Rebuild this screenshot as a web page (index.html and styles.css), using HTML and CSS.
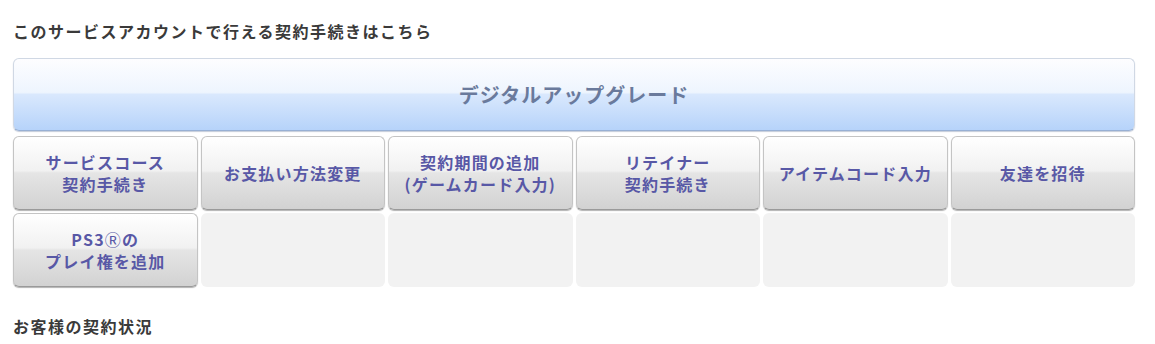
FILE: index.html
```html
<!DOCTYPE html>
<html lang="ja">
    <head>
        <meta charset="UTF-8">
        <meta name="viewport" content="width=device-width, initial-scale=1.0">
        <link rel="stylesheet" href="styles.css">
        <title>契約手続き</title>
    </head>
    <body>
        <div class="page">
            <h2 class="section-title">このサービスアカウントで行える契約手続きはこちら</h2>

            <a class="upgrade-button" href="#">デジタルアップグレード</a>

            <div class="menu-grid">
                <a class="menu-button" href="#"><span>サービスコース<br>契約手続き</span></a>
                <a class="menu-button" href="#"><span>お支払い方法変更</span></a>
                <a class="menu-button" href="#"><span>契約期間の追加<br>(ゲームカード入力)</span></a>
                <a class="menu-button" href="#"><span>リテイナー<br>契約手続き</span></a>
                <a class="menu-button" href="#"><span>アイテムコード入力</span></a>
                <a class="menu-button" href="#"><span>友達を招待</span></a>
                <a class="menu-button" href="#"><span>PS3<span class="reg">Ⓡ</span>の<br>プレイ権を追加</span></a>
                <div class="menu-empty"></div>
                <div class="menu-empty"></div>
                <div class="menu-empty"></div>
                <div class="menu-empty"></div>
                <div class="menu-empty"></div>
            </div>

            <h2 class="section-title status-title">お客様の契約状況</h2>
        </div>
    </body>
</html>
```

FILE: styles.css
```css
body,
html {
    margin: 0;
    background: #fff;
    font-family: "Noto Sans CJK JP", "Noto Sans", sans-serif;
}

.page {
    padding: 0 20px 0 13px;
}

.section-title {
    margin: 0;
    padding-top: 20px;
    font-size: 16px;
    font-weight: bold;
    letter-spacing: 1.5px;
    line-height: 22px;
    color: #3a3a3a;
}

.status-title {
    padding-top: 28px;
}

.upgrade-button {
    display: flex;
    align-items: center;
    justify-content: center;
    height: 71px;
    margin-top: 16px;
    border: 1px solid #d0d8e4;
    border-bottom-color: #98b0d4;
    border-radius: 6px;
    box-shadow: 0 1px 1px rgba(90, 110, 150, 0.35);
    background: linear-gradient(to bottom, #fdfdff 0%, #eef5fe 47%, #d9e8fd 50%, #b6d3fa 100%);
    color: #6a7a9c;
    font-size: 20px;
    font-weight: bold;
    letter-spacing: 1px;
    text-decoration: none;
}

.menu-grid {
    display: grid;
    grid-template-columns: repeat(6, 1fr);
    grid-auto-rows: 74px;
    gap: 3px;
    margin-top: 5px;
}

.menu-button {
    display: flex;
    align-items: center;
    justify-content: center;
    text-align: center;
    border: 1px solid #c4c4c4;
    border-bottom-color: #9a9a9a;
    border-radius: 6px;
    box-shadow: 0 1px 1px rgba(0, 0, 0, 0.3);
    background: linear-gradient(to bottom, #ffffff 0%, #f1f1f1 47%, #e5e5e5 50%, #d2d2d2 100%);
    color: #5858a6;
    font-size: 16px;
    font-weight: bold;
    line-height: 22px;
    letter-spacing: 1.2px;
    text-decoration: none;
}

.menu-button .reg {
    font-weight: normal;
}

.menu-empty {
    background: #f2f2f2;
    border-radius: 6px;
}
```
